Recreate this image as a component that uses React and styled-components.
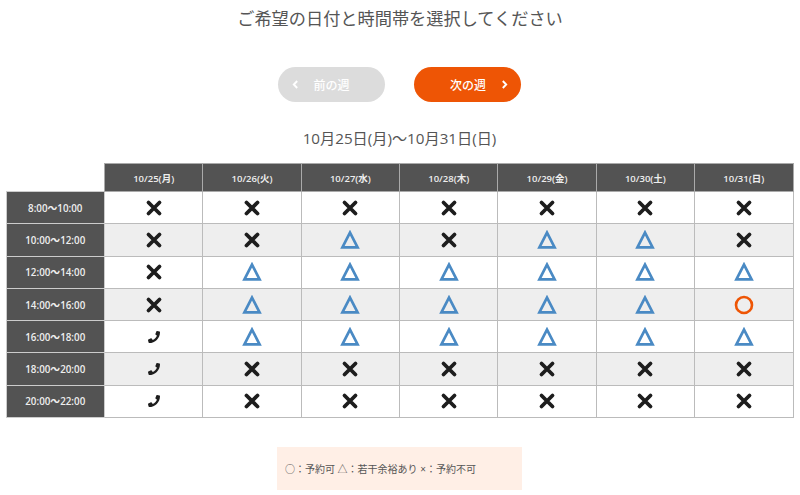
import React from "react";
import styled, { createGlobalStyle } from "styled-components";
import { FaPhone } from "react-icons/fa";

const Global = createGlobalStyle`
  html, body { margin: 0; padding: 0; background: #fff; }
  body { font-family: "Open Sans", "Noto Sans CJK JP", sans-serif; color: #444; }
`;
const Page = styled.div`
  width: 800px; height: 495px; overflow: hidden;
  display: flex; flex-direction: column; align-items: center;
`;
const Title = styled.h1`
  margin: 6px 0 0; height: 25px; font-size: 17.2px; line-height: 25px; font-weight: 400; color: #555;
`;
const Nav = styled.div`
  display: flex; gap: 29px; margin: 36px 1px 0 0;
`;
const NavButton = styled.button`
  width: 107px; height: 35px; border: 0; border-radius: 18px;
  background: ${p => (p.$disabled ? "#dcdcdc" : "#ee5505")};
  color: #fff; font: 500 12px "Noto Sans CJK JP", sans-serif;
  display: flex; align-items: center; justify-content: center;
  gap: ${p => (p.$disabled ? "14px" : "15px")};
  padding: ${p => (p.$disabled ? "0 21px 0 0" : "0 0 0 23px")};
`;
const Range = styled.div`
  margin: 25px 1px 0 0; height: 22px; line-height: 22px; font-size: 15.2px; color: #555;
`;
const Table = styled.table`
  align-self: flex-start; margin: 14px 0 0 5.5px; width: 788px; border-collapse: collapse; table-layout: fixed;
`;
const Corner = styled.th`
  width: 98px; padding: 0; border: 0; background: #fff;
`;
const DayHead = styled.th`
  height: 27px; padding: 0; background: #535353; color: #eee; border: 1px solid #aaa;
  font: 600 9.5px "Open Sans", "Noto Sans CJK JP", sans-serif;
`;
const TimeHead = styled.th`
  height: 31.3px; padding: 0; background: #535353; color: #eee; border: 1px solid #ccc;
  font: 600 9.8px "Open Sans", "Noto Sans CJK JP", sans-serif;
`;
const Slot = styled.td`
  padding: 0; text-align: center; vertical-align: middle; border: 1px solid #bbb;
  background: ${p => (p.$alt ? "#eeeeee" : "#fff")};
`;
const Mark = styled.svg`
  display: block; margin: 0 auto; width: 20px; height: 20px;
`;
const PhoneMark = styled(FaPhone)`
  display: block; margin: 0 auto; width: 12px; height: 12px; color: #1d1d1d;
`;
const Legend = styled.div`
  margin: 29px 1px 0 0; width: 237px; height: 43px; padding-left: 8px; background: #ffefe6; color: #555;
  display: flex; align-items: center; font-size: 10px; white-space: pre;
`;

const Cross = () => (
  <Mark viewBox="0 0 20 20"><path d="M4.5 4.5 15.5 15.5M15.5 4.5 4.5 15.5" fill="none" stroke="#1d1d1d" strokeWidth="3.8" strokeLinecap="round" /></Mark>
);
const Tri = () => (
  <Mark viewBox="0 0 20 20"><path d="M10 2.6 17.6 17.4H2.4Z" fill="none" stroke="#4a8ac4" strokeWidth="2.7" /></Mark>
);
const Circle = () => (
  <Mark viewBox="0 0 20 20"><circle cx="10" cy="10" r="8" fill="none" stroke="#ee5505" strokeWidth="2.6" /></Mark>
);
const Left = () => (
  <svg width="7" height="9" viewBox="0 0 7 9"><path d="M5.2 1 1.8 4.5 5.2 8" fill="none" stroke="#fff" strokeWidth="1.9" /></svg>
);
const Right = () => (
  <svg width="7" height="9" viewBox="0 0 7 9"><path d="M1.8 1 5.2 4.5 1.8 8" fill="none" stroke="#fff" strokeWidth="1.9" /></svg>
);

const days = ["10/25(月)", "10/26(火)", "10/27(水)", "10/28(木)", "10/29(金)", "10/30(土)", "10/31(日)"];
const rows = [
  ["8:00〜10:00", "xxxxxxx"],
  ["10:00〜12:00", "xxtxttx"],
  ["12:00〜14:00", "xtttttt"],
  ["14:00〜16:00", "xttttto"],
  ["16:00〜18:00", "ptttttt"],
  ["18:00〜20:00", "pxxxxxx"],
  ["20:00〜22:00", "pxxxxxx"],
];
const icon = { x: Cross, t: Tri, o: Circle, p: PhoneMark };

export default function App() {
  return (
    <Page>
      <Global />
      <Title>ご希望の日付と時間帯を選択してください</Title>
      <Nav>
        <NavButton $disabled><Left />前の週</NavButton>
        <NavButton>次の週<Right /></NavButton>
      </Nav>
      <Range>10月25日(月)〜10月31日(日)</Range>
      <Table>
        <thead>
          <tr>
            <Corner />
            {days.map(d => <DayHead key={d}>{d}</DayHead>)}
          </tr>
        </thead>
        <tbody>
          {rows.map(([t, cells], i) => (
            <tr key={t}>
              <TimeHead>{t}</TimeHead>
              {[...cells].map((c, j) => {
                const I = icon[c];
                return <Slot key={j} $alt={i % 2 === 1}><I /></Slot>;
              })}
            </tr>
          ))}
        </tbody>
      </Table>
      <Legend>{"○\uFF1A予約可 △\uFF1A若干余裕あり ×\uFF1A予約不可"}</Legend>
    </Page>
  );
}
